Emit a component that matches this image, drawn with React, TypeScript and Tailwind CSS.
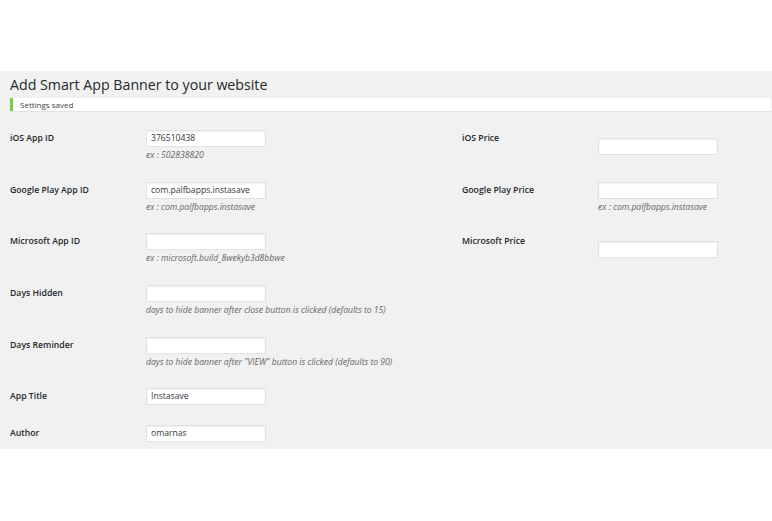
import React from "react";

type Field = { label: string; value?: string; desc?: string; offset?: boolean };

const left: Field[] = [
  { label: "iOS App ID", value: "376510438", desc: "ex : 502838820" },
  { label: "Google Play App ID", value: "com.palfbapps.instasave", desc: "ex : com.palfbapps.instasave" },
  { label: "Microsoft App ID", desc: "ex : microsoft.build_8wekyb3d8bbwe" },
  { label: "Days Hidden", desc: "days to hide banner after close button is clicked (defaults to 15)" },
  { label: "Days Reminder", desc: "days to hide banner after \"VIEW\" button is clicked (defaults to 90)" },
  { label: "App Title", value: "Instasave" },
  { label: "Author", value: "omarnas" },
];

const right: Field[] = [
  { label: "iOS Price", offset: true },
  { label: "Google Play Price", desc: "ex : com.palfbapps.instasave" },
  { label: "Microsoft Price", offset: true },
];

function Row({ f, tall }: { f: Field; tall?: boolean }) {
  return (
    <div className={"flex " + (tall || f.desc ? "h-[51.7px]" : "h-[37px]")}>
      <div className="w-[136px] shrink-0 text-[8.7px] font-semibold leading-[17px] text-[#23282d]">{f.label}</div>
      <div className={f.offset ? "pt-[8px]" : ""}>
        <div className="w-[120px] h-[17px] bg-white border border-[#e2e2e2] shadow-[inset_0_1px_2px_rgba(0,0,0,0.07)] pl-[4px] text-[8.6px] leading-[15px] text-[#32373c]">
          {f.value ?? ""}
        </div>
        {f.desc && (
          <div className="mt-[2px] h-[13px] text-[8.6px] italic leading-[13px] text-[#666] whitespace-nowrap">{f.desc}</div>
        )}
      </div>
    </div>
  );
}

export default function App() {
  return (
    <div className="w-[772px] h-[521px] bg-white font-['Open_Sans',sans-serif]">
      <div className="h-[71px]" />
      <div className="bg-[#f1f1f1] h-[378px] pt-[2px] pl-[10px] pr-[1px]">
        <h1 className="text-[14.2px] leading-[23px] font-normal text-[#23282d]">Add Smart App Banner to your website</h1>
        <div className="mt-[2px] h-[13px] bg-white border-l-[3px] border-[#7ad03a] shadow-[0_1px_1px_rgba(0,0,0,0.06)] pl-[7px] text-[8px] leading-[13px] text-[#444]">
          Settings saved
        </div>
        <div className="flex mt-[19px]">
          <div className="w-[452px] shrink-0">
            {left.map((f) => (
              <Row key={f.label} f={f} />
            ))}
          </div>
          <div>
            {right.map((f) => (
              <Row key={f.label} f={f} tall />
            ))}
          </div>
        </div>
      </div>
    </div>
  );
}
